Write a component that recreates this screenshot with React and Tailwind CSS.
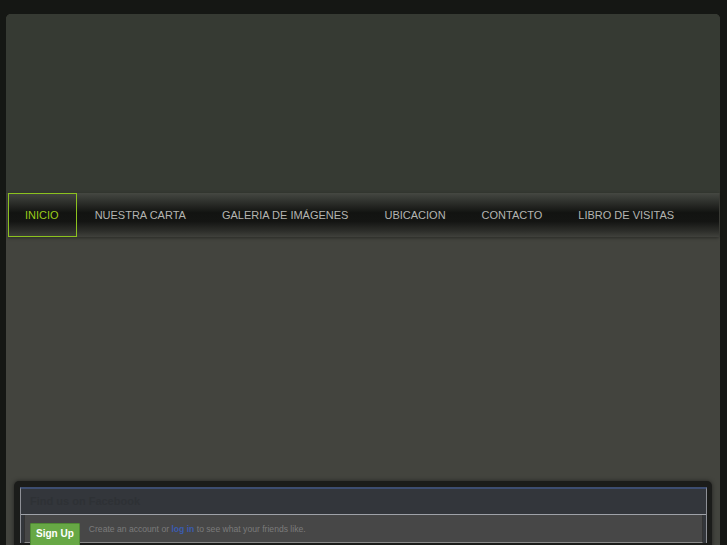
import React from 'react';

const navItems = [
  'INICIO',
  'NUESTRA CARTA',
  'GALERIA DE IMÁGENES',
  'UBICACION',
  'CONTACTO',
  'LIBRO DE VISITAS',
];

export default function App() {
  return (
    <div className="h-[545px] overflow-hidden bg-[#151714] pt-[14px] pl-[6px] pr-[7px] font-['Liberation_Sans',Arial,sans-serif]">
      <div className="rounded-t-[5px] bg-[#43443e] pb-10">
        {/* header */}
        <div className="h-[179px] rounded-t-[5px] bg-[#363a33]" />

        {/* nav */}
        <nav className="ml-[2px] mr-[1px] flex h-[44px] items-stretch bg-[linear-gradient(to_bottom,#454842_0%,#2c2e2a_22%,#121311_45%,#141513_65%,#2f302c_88%,#40413c_100%)] shadow-[0_1px_3px_rgba(0,0,0,0.4)]">
          {navItems.map((item, i) => (
            <a
              key={item}
              href="#"
              className={`flex items-center border text-[11px] leading-none ${
                i === 0
                  ? 'border-[#8cc21f] pl-[16px] pr-[17px] text-[#9ccc1a]'
                  : 'border-transparent px-[17px] text-[#b4b5b1]'
              }`}
            >
              {item}
            </a>
          ))}
        </nav>

        {/* content */}
        <div className="h-[244px]" />

        {/* facebook widget */}
        <div className="mx-[8px] rounded-[5px] bg-[#1b1c1a] pt-[6px] pl-[6px] pr-[5px] pb-2 shadow-[0_0_4px_rgba(0,0,0,0.5)]">
          <div className="border-t-2 border-x border-t-[#3d4d70] border-x-[#8e9096] bg-[#33363b]">
            <div className="flex h-[26px] items-center border-b border-[#9fa2a8] pl-[9px] text-[11px] font-bold text-[#2e3135]">
              Find us on Facebook
            </div>
            <div className="mx-[3px] flex h-[28px] items-start gap-[9px] border-x border-b border-x-[#333] border-b-[#8a8a8a] bg-[#474747] pl-[5px] pt-[8px]">
              <button className="rounded-[1px] border border-[#4f8b34] bg-[#67a845] px-[5px] pt-[5px] pb-[6px] text-[10px] font-bold leading-none text-white">
                Sign Up
              </button>
              <p className="pt-[2px] text-[8.6px] leading-none text-[#7b7b7b]">
                Create an account or{' '}
                <span className="font-bold text-[#3b5bb0]">log in</span> to see what your friends like.
              </p>
            </div>
          </div>
        </div>
      </div>
    </div>
  );
}
